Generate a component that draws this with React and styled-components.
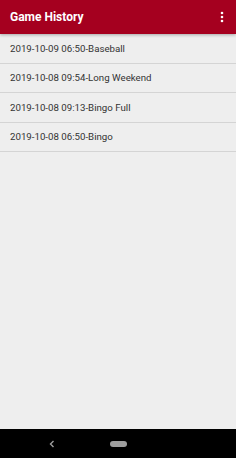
import styled, { createGlobalStyle } from "styled-components";

const GlobalStyle = createGlobalStyle`
  html, body {
    margin: 0;
    padding: 0;
    background: #eeeeee;
  }
  body {
    font-family: Roboto, "Noto Sans", sans-serif;
  }
`;

const games = [
  "2019-10-09 06:50-Baseball",
  "2019-10-08 09:54-Long Weekend",
  "2019-10-08 09:13-Bingo Full",
  "2019-10-08 06:50-Bingo",
];

const App = () => {
  return (
    <>
      <GlobalStyle />
      <Screen>
        <Toolbar>
          <Title>Game History</Title>
          <MenuButton aria-label="more">
            <svg width="4" height="12" viewBox="0 0 4 12">
              <circle cx="2" cy="2" r="1.3" fill="#fff" />
              <circle cx="2" cy="6" r="1.3" fill="#fff" />
              <circle cx="2" cy="10" r="1.3" fill="#fff" />
            </svg>
          </MenuButton>
        </Toolbar>
        <List>
          {games.map((game) => (
            <Row key={game}>{game}</Row>
          ))}
        </List>
        <NavBar>
          <svg width="8" height="10" viewBox="0 0 8 10">
            <path d="M5.5 2 L2.5 5 L5.5 8" stroke="#9e9e9e" strokeWidth="1.4" fill="none" />
          </svg>
          <HomePill />
        </NavBar>
      </Screen>
    </>
  );
};

export default App;

const Screen = styled.div`
  display: flex;
  flex-direction: column;
  width: 236px;
  height: 458px;
  background: #eeeeee;
`;

const Toolbar = styled.div`
  display: flex;
  align-items: center;
  justify-content: space-between;
  height: 34px;
  padding: 0 10px;
  background: #a5001f;
  box-shadow: 0 1px 3px rgba(0, 0, 0, 0.3);
  position: relative;
  z-index: 1;
  flex-shrink: 0;
`;

const Title = styled.h1`
  margin: 0;
  color: #ffffff;
  font-size: 12px;
  font-weight: 700;
`;

const MenuButton = styled.div`
  display: flex;
  align-items: center;
  margin-right: 2px;
`;

const List = styled.div`
  flex: 1;
  display: flex;
  flex-direction: column;
`;

const Row = styled.div`
  display: flex;
  align-items: center;
  height: 29.5px;
  padding: 0 10px;
  border-bottom: 1px solid #d4d4d4;
  color: #333333;
  font-size: 9.7px;
  box-sizing: border-box;
`;

const NavBar = styled.div`
  display: flex;
  align-items: center;
  gap: 54px;
  height: 29px;
  padding: 0 0 0 48px;
  background: #000000;
  flex-shrink: 0;
`;

const HomePill = styled.div`
  width: 17px;
  height: 6px;
  border-radius: 3px;
  background: #9e9e9e;
`;
